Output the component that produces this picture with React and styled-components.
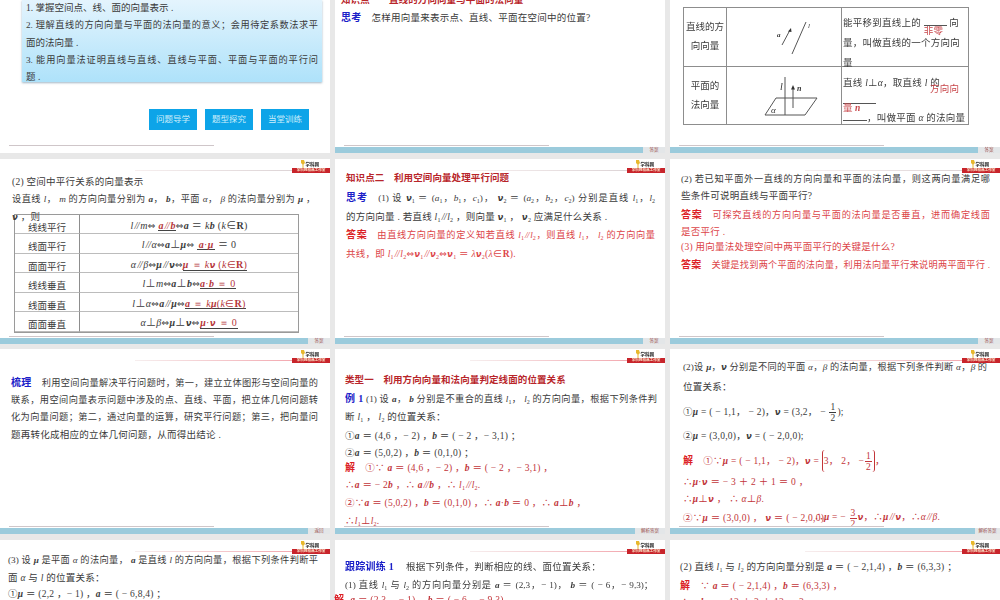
import { Fragment } from 'react';
import styled, { createGlobalStyle } from 'styled-components';

const Global = createGlobalStyle`
  html, body { margin: 0; height: 100%; overflow: hidden; background: #e8e8e8; }
  body {
    font-family: "Liberation Serif", "Noto Sans CJK SC", "DejaVu Sans", sans-serif;
    font-size: 9.5px;
    color: #3a3a3a;
  }
`;

const Board = styled.div`
  display: grid;
  grid-template-columns: repeat(3, 330px);
  grid-auto-rows: 185px;
  column-gap: 5px;
  row-gap: 5.5px;
  height: 632px;
  overflow: hidden;
  margin-top: -32px;
  filter: blur(0.55px);
`;

const Card = styled.section`
  position: relative;
  display: flex;
  flex-direction: column;
  background: #fff;
`;

const Body = styled.div`
  flex: 1;
  min-height: 0;
  padding: ${(p) => p.$top || 0}px ${(p) => p.$right || 10}px 0 ${(p) => p.$left || 11}px;
`;

const FootLine = styled.div`
  width: 205px;
  height: 1px;
  margin: 0 0 1px 9px;
  background: #cfc6c9;
`;

const Bar = styled.div`
  display: flex;
  justify-content: flex-end;
  height: 6px;
  background: #9bcbdc;
`;

const BarTag = styled.span`
  width: ${(p) => p.$w || 22}px;
  background: #e3e6e8;
  color: #a0524f;
  font-size: 4.5px;
  line-height: 6px;
  text-align: center;
`;

const Blank = styled.div`
  height: 6px;
`;

const Brand = styled.div`
  position: absolute;
  top: 1px;
  right: 0;
  display: flex;
  flex-direction: column;
  align-items: flex-end;
  width: 195px;
`;

const BrandMark = styled.div`
  display: flex;
  align-items: center;
  gap: 1px;
  height: 8px;
  margin-right: 11px;
  font-size: 4.5px;
  font-weight: 700;
  color: #222;
`;

const BrandBand = styled.div`
  display: flex;
  align-items: center;
  width: 100%;
  height: 5px;
`;

const BrandLine = styled.div`
  flex: 1;
  height: 1px;
  background: linear-gradient(90deg, #f6eeee, ${(p) => p.$pink ? '#f3a9b0' : '#ddd4d6'});
`;

const BrandLabel = styled.div`
  width: 38px;
  height: 5px;
  background: #c8242b;
  color: #f7dcc0;
  font-size: 3.6px;
  line-height: 5px;
  font-weight: 700;
  text-align: center;
  white-space: nowrap;
  overflow: hidden;
`;

const Line = styled.div`
  height: ${(p) => p.$h || 17}px;
  line-height: ${(p) => p.$h || 17}px;
  color: ${(p) => p.$color || 'inherit'};
  letter-spacing: 0.25px;
  white-space: nowrap;
  ${(p) => p.$fill && 'font-size: 9.2px; letter-spacing: 0; text-align: justify; text-align-last: justify;'}
`;

const Spill = styled(Line)`
  height: 10px;
`;

const red = '#dc4448';
const deep = '#c2353a';

const Title = styled(Line)`
  font-size: 9.5px;
  letter-spacing: 0.1px;
  font-weight: 700;
  color: #b8252a;
`;

const Label = styled.b`
  color: ${(p) => p.$red ? '#dc1f26' : '#1b20c8'};
  font-size: 10px;
  margin-right: ${(p) => p.$gap ?? 10}px;
`;

const M = styled.i`
  font-family: "Liberation Serif", serif;
`;

const V = styled.b`
  font-family: "Liberation Serif", serif;
  font-style: italic;
`;

const Nu = styled.b`
  font-family: "DejaVu Sans", sans-serif;
  font-style: italic;
  font-size: 8.5px;
`;

const Sub = styled.sub`
  font-size: 6px;
  line-height: 0;
  vertical-align: -2px;
`;

const Par = styled.i`
  letter-spacing: -0.4px;
  margin: 0 1px;
`;

const Arrow = styled.span`
  font-family: "DejaVu Sans", sans-serif;
  font-size: 9px;
`;

const iff = <Arrow>⇔</Arrow>;

const GoalBox = styled.div`
  margin: 0 7px 0 21px;
  padding: 0 4px;
  height: 82px;
  background: linear-gradient(180deg, #e4f4fd, #aee2fa);
  box-shadow: 0 1px 2px rgba(70, 110, 140, 0.5);
  line-height: 17.3px;
`;

const NavRow = styled.div`
  display: flex;
  justify-content: flex-end;
  gap: 8px;
  margin: 27px 20px 0 0;
`;

const NavButton = styled.div`
  width: 48px;
  height: 21px;
  background: #0da4e8;
  color: #cdeefb;
  font-size: 8.5px;
  line-height: 21px;
  text-align: center;
`;

const SheetTable = styled.table`
  border-collapse: collapse;
  table-layout: fixed;
  width: 285px;
  margin-left: 2px;
`;

const Cell = styled.td`
  box-sizing: border-box;
  width: ${(p) => p.$w}px;
  height: ${(p) => p.$rowH}px;
  padding: ${(p) => p.$pad || 0}px ${(p) => p.$pad ? 1 : 0}px 0;
  border: 1px solid #8d8d8d;
  vertical-align: ${(p) => p.$pad ? 'top' : 'middle'};
  text-align: ${(p) => p.$pad ? 'left' : 'center'};
  line-height: 19px;
`;

const Drawing = styled.svg`
  display: block;
  text { font-family: "Liberation Serif", serif; font-style: italic; fill: #333; }
`;

const Overlay = styled.span`
  position: relative;
`;

const RedOver = styled.span`
  position: absolute;
  left: ${(p) => p.$x}px;
  top: ${(p) => p.$y}px;
  color: #c8474b;
  white-space: nowrap;
  line-height: 10px;
`;

const Gap = styled.span`
  display: inline-block;
  width: ${(p) => p.$w}px;
  border-bottom: 1px solid #555;
  vertical-align: baseline;
`;

const RedTag = styled.div`
  width: 33px;
  height: 10px;
  border-top: 1px solid #555;
  color: #c8474b;
  line-height: 8px;
  box-sizing: border-box;
`;

const RuleTable = styled.div`
  display: grid;
  grid-template-columns: 65px 218px;
  grid-auto-rows: 19.5px;
  width: 283px;
  margin: -12.5px 0 0 2px;
  border: 1px solid #9a9a9a;
`;

const RuleName = styled.div`
  border-bottom: 1px solid #bcbcbc;
  border-right: 1px solid #8d8d8d;
  padding-top: 7px;
  line-height: 12px;
  text-align: center;
`;

const RuleBody = styled.div`
  border-bottom: 1px solid #bcbcbc;
  padding-top: 5px;
  font-size: 10px;
  letter-spacing: 0.3px;
  line-height: 12px;
  text-align: center;
  white-space: nowrap;
`;

const Fill = styled.span`
  display: inline-block;
  min-width: ${(p) => p.$w}px;
  border-bottom: 1px solid #444;
  color: #b5363a;
  line-height: 9px;
  font-family: "Liberation Serif", serif;
`;

const Frac = styled.span`
  display: inline-flex;
  flex-direction: column;
  align-items: center;
  vertical-align: middle;
  line-height: 10px;
  font-size: 9.5px;
  margin: 0 1px;
  & > span:first-child { border-bottom: 1px solid currentColor; padding: 0 1px; }
`;

const Paren = styled.span`
  display: inline-flex;
  align-items: center;
  border-left: 1px solid currentColor;
  border-right: 1px solid currentColor;
  border-radius: 3px;
  padding: 0 1px;
  height: 22px;
  vertical-align: middle;
`;

const Lap = styled.span`
  margin-left: -10px;
`;

const Margin = styled.span`
  margin-left: -11px;
`;

function Slide({ tag, tagWidth, pink, noBar, children }) {
  return (
    <Card>
      <Brand>
        <BrandMark>
          <svg width="4" height="8" viewBox="0 0 4 8">
            <path d="M0 0h3l1 3-1.5 1.5V8H1.5V4.5L0 3z" fill="#e8b82e" />
          </svg>
          学科网
        </BrandMark>
        <BrandBand>
          <BrandLine $pink={pink} />
          <BrandLabel>学科网精品工作室</BrandLabel>
        </BrandBand>
      </Brand>
      {children}
      <FootLine />
      {noBar ? <Blank /> : <Bar><BarTag $w={tagWidth}>{tag}</BarTag></Bar>}
    </Card>
  );
}

function LineDrawing() {
  return (
    <Drawing width="115" height="58" viewBox="0 0 115 58">
      <path d="M55 37 63 22M65 46 79 14" stroke="#555" fill="none" />
      <path d="M64 20 61 23.5 64.5 24z" fill="#333" />
      <text x="50" y="29" fontSize="7" fontWeight="700">a</text>
      <text x="81" y="20" fontSize="7">l</text>
    </Drawing>
  );
}

function PlaneDrawing() {
  return (
    <Drawing width="115" height="57" viewBox="0 0 115 57">
      <path d="M38 48 49 31H90L78 48zM58 10V48M66 41V21" stroke="#555" fill="none" />
      <path d="M66 18 64 22.5H68z" fill="#333" />
      <text x="53" y="23" fontSize="10">l</text>
      <text x="70" y="24" fontSize="8" fontWeight="700">n</text>
      <text x="44" y="46" fontSize="9">α</text>
    </Drawing>
  );
}

const rules = [
  ['线线平行', <><M>l</M><Par>//</Par><M>m</M>{iff} <Fill $w={15}><V>a</V><Par>//</Par><V>b</V></Fill>{iff}<V>a</V> ＝ <M>k</M><V>b</V> (<M>k</M>∈<b>R</b>)</>],
  ['线面平行', <><M>l</M><Par>//</Par><M>α</M>{iff}<V>a</V>⊥<V>μ</V>{iff} <Fill $w={18}><V>a</V>·<V>μ</V></Fill> ＝ 0</>],
  ['面面平行', <><M>α</M><Par>//</Par><M>β</M>{iff}<V>μ</V><Par>//</Par><Nu>ν</Nu>{iff}<Fill $w={57}><V>μ</V> ＝ <M>k</M><Nu>ν</Nu> (<M>k</M>∈<b>R</b>)</Fill></>],
  ['线线垂直', <><M>l</M>⊥<M>m</M>{iff}<V>a</V>⊥<V>b</V>{iff}<Fill $w={33}><V>a</V>·<V>b</V> ＝ 0</Fill></>],
  ['线面垂直', <><M>l</M>⊥<M>α</M>{iff}<V>a</V><Par>//</Par><V>μ</V>{iff}<Fill $w={56}><V>a</V> ＝ <M>k</M><V>μ</V>(<M>k</M>∈<b>R</b>)</Fill></>],
  ['面面垂直', <><M>α</M>⊥<M>β</M>{iff}<V>μ</V>⊥<Nu>ν</Nu>{iff}<Fill $w={38}><V>μ</V>·<Nu>ν</Nu> ＝ 0</Fill></>],
];

export default function App() {
  return (
    <>
      <Global />
      <Board>
        <Slide noBar>
          <Body $top={32} $left={1} $right={1}>
            <GoalBox>
              <div>1. 掌握空间点、线、面的向量表示 .</div>
              <Line $h={17.3} $fill>2. 理解直线的方向向量与平面的法向量的意义；会用待定系数法求平</Line>
              <div>面的法向量 .</div>
              <Line $h={17.3} $fill>3. 能用向量法证明直线与直线、直线与平面、平面与平面的平行问</Line>
              <div>题 .</div>
            </GoalBox>
            <NavRow>
              <NavButton>问题导学</NavButton>
              <NavButton>题型探究</NavButton>
              <NavButton>当堂训练</NavButton>
            </NavRow>
          </Body>
        </Slide>

        <Slide tag="答案">
          <Body $top={23.5} $left={6}>
            <Title>知识点一　直线的方向向量与平面的法向量</Title>
            <Line><Label>思考</Label>怎样用向量来表示点、直线、平面在空间中的位置?</Line>
          </Body>
        </Slide>

        <Slide tag="答案">
          <Body $top={39} $left={11}>
            <SheetTable>
              <tbody>
                <tr>
                  <Cell $w={43} $rowH={59}>直线的方<br />向向量</Cell>
                  <Cell $w={115} $rowH={59}><LineDrawing /></Cell>
                  <Cell $w={127} $rowH={59} $pad={5}>
                    <Line $h={20}>能平移到直线上的 <Overlay><Gap $w={23} /><RedOver $x={0} $y={8}>非零</RedOver></Overlay> 向</Line>
                    <Line $h={20}>量，叫做直线的一个方向向</Line>
                    <Spill $h={20}>量</Spill>
                  </Cell>
                </tr>
                <tr>
                  <Cell $rowH={58}>平面的<br />法向量</Cell>
                  <Cell $rowH={58}><PlaneDrawing /></Cell>
                  <Cell $rowH={58} $pad={6}>
                    <Line $h={20}>直线 <M>l</M>⊥<M>α</M>，取直线 <M>l</M> 的<Overlay><RedOver $x={-10} $y={6}>方向向</RedOver></Overlay></Line>
                    <Line $h={10} />
                    <RedTag>量 <V>n</V></RedTag>
                    <Line $h={10}><Gap $w={24} />，叫做平面 <M>α</M> 的法向量</Line>
                  </Cell>
                </tr>
              </tbody>
            </SheetTable>
          </Body>
        </Slide>

        <Slide tag="答案">
          <Body $top={15} $left={12} $right={15}>
            <Line $h={17.5}>(2) 空间中平行关系的向量表示</Line>
            <Line $h={17.5} $fill>设直线 <M>l</M>， <M>m</M> 的方向向量分别为 <V>a</V>， <V>b</V>，平面 <M>α</M>， <M>β</M> 的法向量分别为 <V>μ</V> ，</Line>
            <Line $h={17.5}><Nu>ν</Nu> ，则</Line>
            <RuleTable>
              {rules.map(([name, body]) => (
                <Fragment key={name}>
                  <RuleName>{name}</RuleName>
                  <RuleBody>{body}</RuleBody>
                </Fragment>
              ))}
            </RuleTable>
          </Body>
        </Slide>

        <Slide tag="答案">
          <Body $top={10.5} $left={11}>
            <Title $h={19}>知识点二　利用空间向量处理平行问题</Title>
            <Line $h={19} $fill><Label>思考</Label>(1) 设 <Nu>ν</Nu><Sub>1</Sub> ＝ (<M>a</M><Sub>1</Sub>，<M>b</M><Sub>1</Sub>，<M>c</M><Sub>1</Sub>)， <Nu>ν</Nu><Sub>2</Sub> ＝ (<M>a</M><Sub>2</Sub>，<M>b</M><Sub>2</Sub>，<M>c</M><Sub>2</Sub>) 分别是直线 <M>l</M><Sub>1</Sub>，<M>l</M><Sub>2</Sub></Line>
            <Line $h={21}>的方向向量 . 若直线 <M>l</M><Sub>1</Sub><Par>//</Par><M>l</M><Sub>2</Sub> ，则向量 <Nu>ν</Nu><Sub>1</Sub> ， <Nu>ν</Nu><Sub>2</Sub> 应满足什么关系 .</Line>
            <Line $h={13} $fill $color={red}><Label $red>答案</Label>由直线方向向量的定义知若直线 <M>l</M><Sub>1</Sub><Par>//</Par><M>l</M><Sub>2</Sub>，则直线 <M>l</M><Sub>1</Sub>， <M>l</M><Sub>2</Sub> 的方向向量</Line>
            <Line $h={27} $color={red}>共线，即 <M>l</M><Sub>1</Sub><Par>//</Par><M>l</M><Sub>2</Sub>{iff}<Nu>ν</Nu><Sub>1</Sub><Par>//</Par><Nu>ν</Nu><Sub>2</Sub>{iff}<Nu>ν</Nu><Sub>1</Sub> ＝ <M>λ</M><Nu>ν</Nu><Sub>2</Sub>(<M>λ</M>∈<b>R</b>).</Line>
          </Body>
        </Slide>

        <Slide tag="答案">
          <Body $top={12.5} $left={11}>
            <Line $fill>(2) 若已知平面外一直线的方向向量和平面的法向量，则这两向量满足哪</Line>
            <Line>些条件可说明直线与平面平行?</Line>
            <Line $h={19} $fill $color={red}><Label $red>答案</Label>可探究直线的方向向量与平面的法向量是否垂直，进而确定线面</Line>
            <Line $color={red}>是否平行 .</Line>
            <Line $h={13} $color={red}>(3) 用向量法处理空间中两平面平行的关键是什么?</Line>
            <Line $h={21} $fill $color={red}><Label $red>答案</Label>关键是找到两个平面的法向量，利用法向量平行来说明两平面平行 .</Line>
          </Body>
        </Slide>

        <Slide tag="返回" pink>
          <Body $top={25} $left={11} $right={12}>
            <Line $h={17.5} $fill><Label>梳理</Label>利用空间向量解决平行问题时，第一，建立立体图形与空间向量的</Line>
            <Line $h={17.5} $fill>联系，用空间向量表示问题中涉及的点、直线、平面，把立体几何问题转</Line>
            <Line $h={17.5} $fill>化为向量问题；第二，通过向量的运算，研究平行问题；第三，把向量问</Line>
            <Line $h={17.5}>题再转化成相应的立体几何问题，从而得出结论 .</Line>
          </Body>
        </Slide>

        <Slide tag="解析答案" tagWidth={30} pink>
          <Body $top={22.5} $left={10} $right={8}>
            <Title>类型一　利用方向向量和法向量判定线面的位置关系</Title>
            <Line $h={19} $fill><Label $gap={0}>例 1</Label> (1) 设 <V>a</V>， <V>b</V> 分别是不重合的直线 <M>l</M><Sub>1</Sub>， <M>l</M><Sub>2</Sub> 的方向向量，根据下列条件判</Line>
            <Line $h={19}>断 <M>l</M><Sub>1</Sub> ， <M>l</M><Sub>2</Sub> 的位置关系：</Line>
            <Line $h={19}>①<V>a</V> ＝ (4,6 ，− 2) ，<V>b</V> ＝ ( − 2 ，− 3,1) ；</Line>
            <Line $h={15}>②<V>a</V> ＝ (5,0,2) ，<V>b</V> ＝ (0,1,0) ；</Line>
            <Line $h={13} $color={deep}><Label $red>解</Label>①∵ <V>a</V> ＝ (4,6 ，− 2) ，<V>b</V> ＝ ( − 2 ，− 3,1) ，</Line>
            <Line $h={23} $color={deep}>∴<V>a</V> ＝ − 2<V>b</V> ，∴ <V>a</V><Par>//</Par><V>b</V> ，∴ <M>l</M><Sub>1</Sub><Par>//</Par><M>l</M><Sub>2</Sub>.</Line>
            <Line $h={13} $color={deep}>②∵<V>a</V> ＝ (5,0,2) ，<V>b</V> ＝ (0,1,0) ，∴ <V>a</V>·<V>b</V> ＝ 0 ，∴ <V>a</V>⊥<V>b</V> ，</Line>
            <Line $h={23} $color={deep}>∴<M>l</M><Sub>1</Sub>⊥<M>l</M><Sub>2</Sub>.</Line>
          </Body>
        </Slide>

        <Slide tag="解析答案" tagWidth={25} pink>
          <Body $top={9.5} $left={13} $right={13}>
            <Line $fill>(2)设 <V>μ</V>，<Nu>ν</Nu> 分别是不同的平面 <M>α</M>，<M>β</M> 的法向量，根据下列条件判断 <M>α</M>，<M>β</M> 的</Line>
            <Line $h={23}>位置关系：</Line>
            <Line $h={27}>①<V>μ</V> = ( − 1,1， − 2)，<Nu>ν</Nu> = (3,2， − <Frac><span>1</span><span>2</span></Frac>);</Line>
            <Line $h={21}>②<V>μ</V> = (3,0,0)，<Nu>ν</Nu> = ( − 2,0,0);</Line>
            <Line $h={27} $color={deep}><Label $red>解</Label>①∵<V>μ</V> = ( − 1,1， − 2)，<Nu>ν</Nu> = <Paren>3， 2， − <Frac><span>1</span><span>2</span></Frac></Paren>，</Line>
            <Line $color={deep}>∴<V>μ</V>·<Nu>ν</Nu> ＝ − 3 ＋ 2 ＋ 1 ＝ 0 ，</Line>
            <Line $color={deep}>∴<V>μ</V>⊥<Nu>ν</Nu> ， ∴ <M>α</M>⊥<M>β</M>.</Line>
            <Line $h={19} $color={deep}>②∵<V>μ</V> ＝ (3,0,0) ， <Nu>ν</Nu> ＝ ( − 2,0,0)<Lap>∴<V>μ</V> = − <Frac><span>3</span><span>2</span></Frac><Nu>ν</Nu>，∴<V>μ</V><Par>//</Par><Nu>ν</Nu>，∴<M>α</M><Par>//</Par><M>β</M>.</Lap></Line>
          </Body>
        </Slide>

        <Slide tag="返回" pink>
          <Body $top={12.5} $left={8} $right={12}>
            <Line $fill>(3) 设 <V>μ</V> 是平面 <M>α</M> 的法向量， <V>a</V> 是直线 <M>l</M> 的方向向量，根据下列条件判断平</Line>
            <Line $h={19}>面 <M>α</M> 与 <M>l</M> 的位置关系：</Line>
            <Line $h={13}>①<V>μ</V> ＝ (2,2 ，− 1) ，<V>a</V> ＝ ( − 6,8,4) ；</Line>
          </Body>
        </Slide>

        <Slide tag="解析答案" tagWidth={30} pink>
          <Body $top={18.5} $left={10} $right={12}>
            <Line><Label $gap={12}>跟踪训练 1</Label>根据下列条件，判断相应的线、面位置关系：</Line>
            <Line $h={21} $fill>(1) 直线 <M>l</M><Sub>1</Sub> 与 <M>l</M><Sub>2</Sub> 的方向向量分别是 <V>a</V> ＝ (2,3，− 1)， <V>b</V> ＝ ( − 6，− 9,3)；</Line>
            <Line $h={7} $color={deep}><Margin><Label $red $gap={6}>解</Label></Margin><V>a</V> ＝ (2,3 ，− 1) ，<V>b</V> ＝ ( − 6 ，− 9,3)</Line>
          </Body>
        </Slide>

        <Slide tag="解析答案" tagWidth={25} pink>
          <Body $top={19.5} $left={10}>
            <Line>(2) 直线 <M>l</M><Sub>1</Sub> 与 <M>l</M><Sub>2</Sub> 的方向向量分别是 <V>a</V> ＝ ( − 2,1,4) ，<V>b</V> ＝ (6,3,3) ；</Line>
            <Line $h={19} $color={deep}><Label $red>解</Label>∵ <V>a</V> ＝ ( − 2,1,4) ，<V>b</V> ＝ (6,3,3) ，</Line>
            <Line $h={15} $color={deep}>∴ <V>a</V>·<V>b</V> ＝ − 12 ＋ 3 ＋ 12 ＝ 3</Line>
          </Body>
        </Slide>
      </Board>
    </>
  );
}
